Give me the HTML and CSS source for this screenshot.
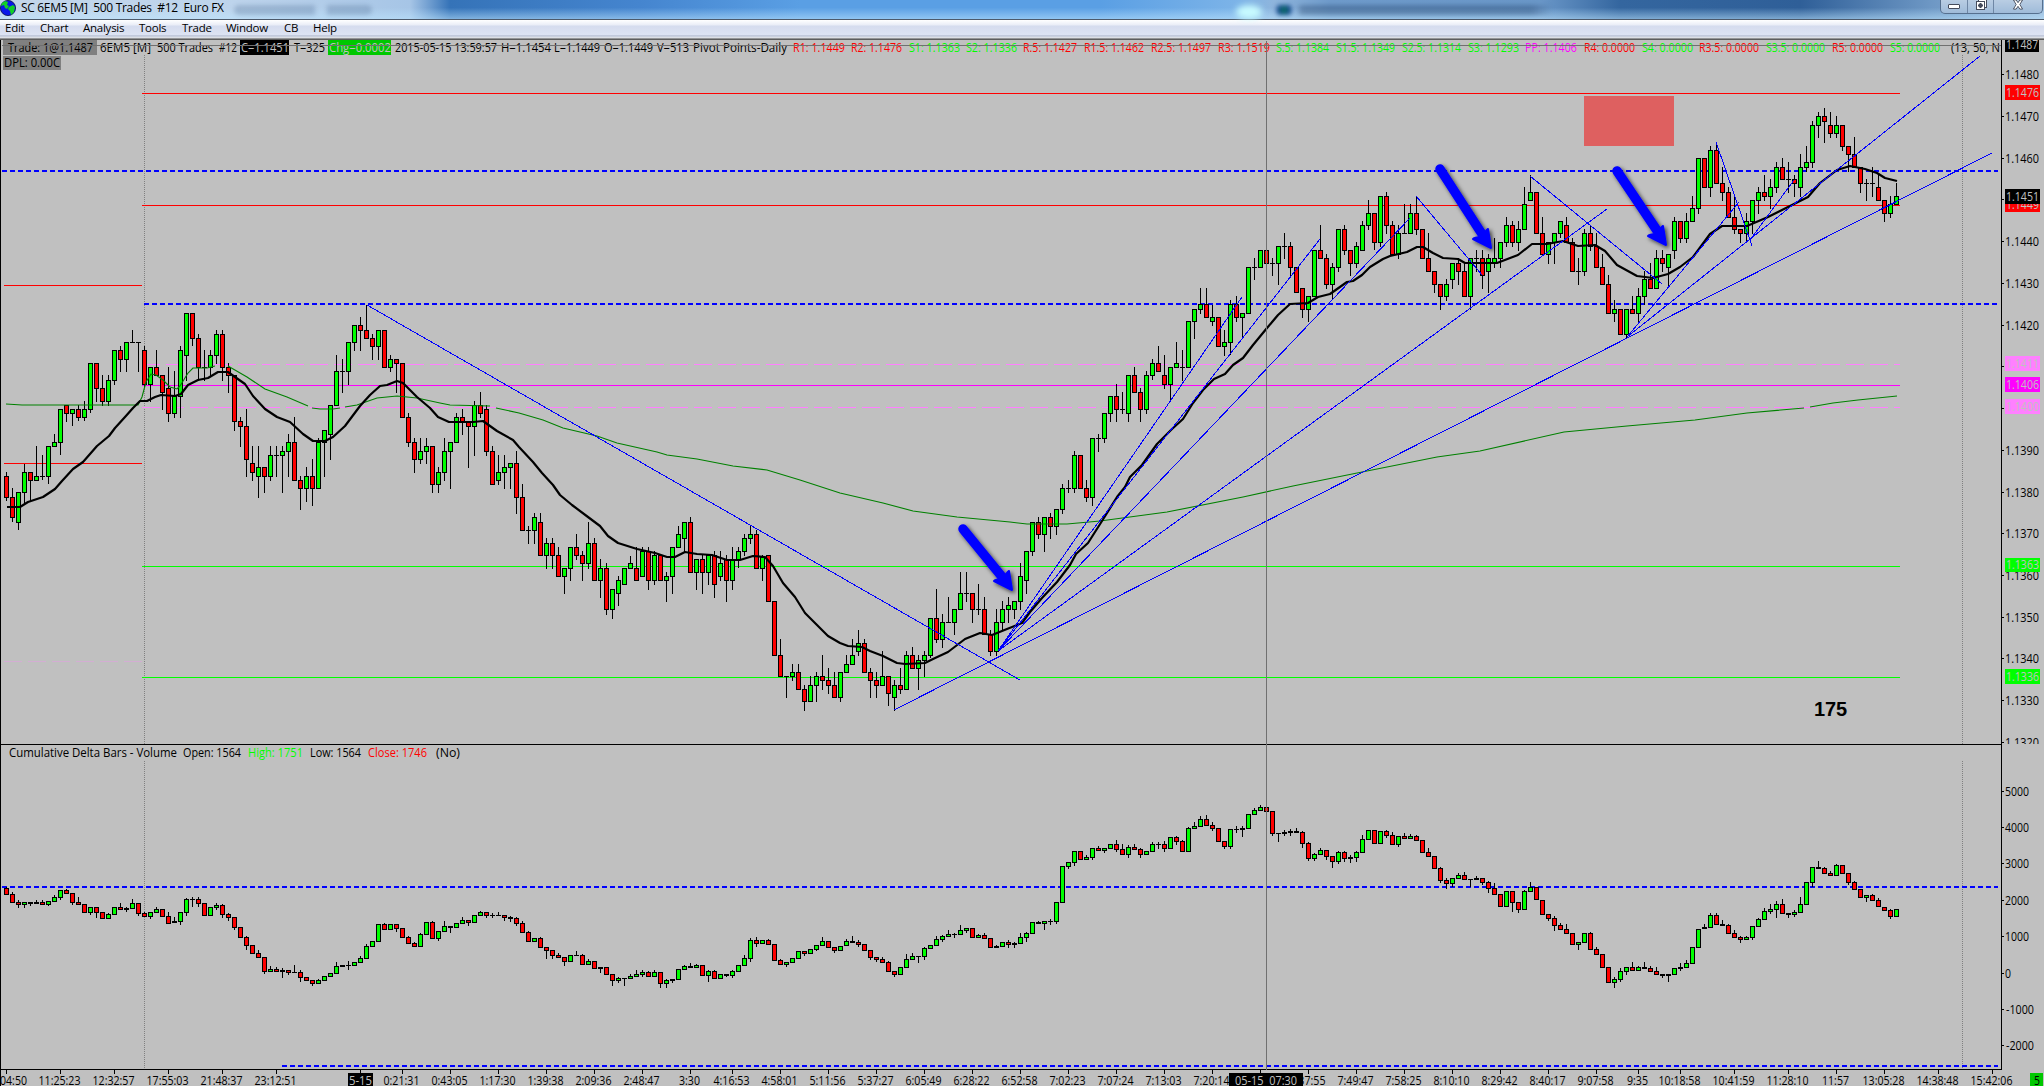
FILE: index.html
```html
<!DOCTYPE html>
<html lang="en">
<head>
  <meta charset="UTF-8">
  <title>SC 6EM5 [M] 500 Trades #12 Euro FX</title>
  <link rel="stylesheet" href="styles.css">
</head>
<body>

<header class="titlebar">
  <svg class="globe" viewBox="0 0 16 16">
    <circle cx="8" cy="8" r="7.6" fill="#0a18e8" stroke="#04084a" stroke-width=".8"/>
    <path d="M2 3l3-2 3 1-1 3 2 1-2 3-2-1-1-3-3 1zM9 7l4-2 2 2-1 5-3 3-1-4-2-2z" fill="#12d028"/>
  </svg>
  <h1>SC 6EM5 [M]&nbsp; 500 Trades&nbsp; #12&nbsp; Euro FX</h1>
  <div class="ghost ghost-left"></div>
  <div class="glow"></div>
  <div class="ghost ghost-right"></div>
  <div class="window-buttons">
    <span class="min"><i></i></span>
    <span class="max"><i></i></span>
    <span class="close"><svg viewBox="0 0 14 12"><path d="M2 1h3l2 3 2-3h3L9 6l3 5H9L7 8l-2 3H2l3-5z" fill="#fff" stroke="#454c5c"/></svg></span>
  </div>
</header>

<nav class="menu">
  <a>Edit</a><a>Chart</a><a>Analysis</a><a>Tools</a><a>Trade</a><a>Window</a><a>CB</a><a>Help</a>
</nav>

<main>
  <svg id="chart" class="chart" viewBox="0 40 2044 1046">
    <defs>
      <clipPath id="upper"><rect x="0" y="40" width="2044" height="704"/></clipPath>
      <clipPath id="plot"><rect x="0" y="40" width="2001" height="1046"/></clipPath>
      <filter id="shadow" x="-30%" y="-30%" width="160%" height="160%">
        <feDropShadow dx="2" dy="2" stdDeviation="2" flood-opacity=".7"/>
      </filter>
      <g id="arrowhead"><path d="M0 0L-18-9Q-17-11-9-11Q-5-18-3-19Z"/></g>
    </defs>

    <!-- session breaks -->
    <g class="session">
      <path d="M144.5 55V744M144.5 761V1069M1962.5 55V744M1962.5 761V1069"/>
    </g>

    <!-- pivots -->
    <g class="line">
      <path class="red" d="M4 285.5H142M4 463.5H142M142 93.5H1900M142 205.5H1900"/>
      <path class="magenta" d="M142 385.5H1900"/>
      <path class="pink" d="M142 364.5H1900M142 407.5H1900"/>
      <path class="pink faint" d="M4 661.5H142"/>
      <path class="lime" d="M142 566.5H1900M142 677.5H1900"/>
      <path class="level" d="M2 171H1998M144 304H1998M2 887H1998M282 1066H1998"/>
    </g>

    <rect class="zone" x="1584" y="96" width="90" height="50"/>

    <g id="price" class="candles"></g>
    <g id="delta" class="candles"></g>

    <polyline class="slow" points="6,404 22,405 138,405 142,397 146,382 151,374 156,375 163,380 170,387 177,389 180,386 188,373 193,368 207,368 215,366"/>
    <polyline class="slow" points="228,366 247,377 265,389 287,397 308,406"/>
    <polyline class="slow" points="312,408 320,409 333,409 340,408"/>
    <polyline class="slow" points="345,407 357,405 377,398 397,396 417,398 440,403 450,405 490,406"/>
    <polyline class="slow" points="496,408 519,413 543,420 563,428 597,436 617,443 657,452 667,455 697,459 733,466 767,470 800,480 840,493 883,503 913,511 957,517 1010,522 1027,524 1067,524 1100,521 1167,512 1243,497 1293,486 1367,471 1437,457 1480,451 1564,432 1627,426 1695,420 1747,413 1804,408"/>
    <polyline class="slow" points="1810,407 1833,403 1858,400 1897,396"/>

    <polyline class="fast" points="7,507 20,507 28,502 43,497 55,489 62,481 73,469 83,462 97,446 109,436 115,428 125,417 133,408 140,401 147,401 155,397 161,395 175,396 181,394 188,385 198,380 208,378 218,372 228,372 235,377 245,384 253,396 265,409 277,417 290,422 303,434 313,441 325,441 333,437 345,426 360,406 370,395 380,386 387,385 397,381 403,383 417,397 430,408 438,417 449,422 473,422 483,421 497,431 513,440 519,447 533,462 542,473 553,485 560,495 572,505 588,517 600,526 608,536 618,543 637,549 655,553 667,557 675,557 685,552 697,554 712,555 727,560 740,560 753,556 765,557 773,566 783,583 795,597 805,613 817,625 828,636 840,643 848,646 862,647 870,651 883,656 897,663 905,664 925,663 933,659 948,652 965,639 980,633 992,635 1007,629 1022,623 1030,612 1042,598 1057,582 1070,565 1076,554 1088,543 1102,521 1117,497 1125,487 1130,477 1142,465 1157,444 1172,429 1183,419 1193,403 1203,390 1214,379 1225,374 1233,365 1243,358 1253,345 1267,328 1278,315 1290,304 1308,303 1318,297 1330,294 1347,282 1353,281 1362,275 1370,267 1383,259 1390,256 1407,252 1417,247 1423,247 1433,253 1443,258 1458,259 1465,263 1497,263 1518,255 1532,244 1547,244 1563,241 1578,246 1595,245 1605,251 1617,265 1637,276 1653,278 1668,274 1680,267 1693,257 1710,234 1722,226 1747,226 1768,217 1790,206 1808,197 1820,183 1837,170 1850,166 1865,169 1877,173 1885,178 1897,181"/>

    <g class="trend">
      <path d="M367 305L1020 680M894 710L1992 153"/>
      <path d="M998 651L1242 297M998 651L1320 239M998 651L1410 218M998 651L1607 209"/>
      <path d="M1416 196L1482 275M1530 176L1662 284M1716 142L1752 246"/>
      <path d="M1627 337L1739 202M1627 337L1980 56M1750 240L1794 180"/>
    </g>

    <!-- entry arrows -->
    <g class="arrow" filter="url(#shadow)">
      <path class="shaft" d="M1440 169L1482 234"/><use href="#arrowhead" x="1491" y="248"/>
    </g>
    <g class="arrow" filter="url(#shadow)">
      <path class="shaft" d="M1617 171L1658 232"/><use href="#arrowhead" x="1666" y="245"/>
    </g>
    <g class="arrow" filter="url(#shadow)">
      <path class="shaft" d="M963 529L1003 578"/><use href="#arrowhead" x="1012" y="590"/>
    </g>

    <text class="note" x="1814" y="716" textLength="33">175</text>

    <g id="status" clip-path="url(#plot)"></g>
    <g id="axis"></g>

    <path class="frame" d="M.5 40V1086M2001.5 40V1070M0 744.5H2002M0 1069.5H2002"/>
    <path class="cursor" d="M1266.5 41V1070M2 45.5H2001"/>
    <g id="tags"></g>
  </svg>
</main>

<script src="chart.js"></script>
</body>
</html>
```
FILE: styles.css
```css
* { box-sizing: border-box; margin: 0; padding: 0; }

body {
  width: 2044px;
  height: 1086px;
  overflow: hidden;
  background: #c0c0c0;
  font-family: "Open Sans", "Noto Sans", sans-serif;
  color: #000;
}

/* title bar */
.titlebar {
  display: flex;
  align-items: flex-start;
  height: 20px;
  border-bottom: 1px solid #4d5a6b;
  background:
    linear-gradient(to bottom, rgba(255,255,255,0) 40%, rgba(190,230,255,.55)),
    linear-gradient(to right, #c3d6ea 0, #bdd4ec 240px, #a6c5e6 410px, #3573b8 450px, #4585cf 640px, #5a9fe4 800px, #5a9fe4 1100px, #7db4e8 1240px, #8fb5dc 1275px, #6f9bcb 1330px, #6a97c8 1540px, #34669f 1620px, #2f5f98 1800px, #6d97c4 1930px, #9dbcdc 2044px);
}

.globe {
  width: 16px;
  height: 16px;
}

.titlebar h1 {
  width: 218px;
  padding-left: 5px;
  font-size: 12px;
  line-height: 15px;
  font-weight: 400;
  letter-spacing: -.32px;
  white-space: nowrap;
}

.ghost {
  height: 10px;
  margin-top: 5px;
  border-radius: 5px;
  filter: blur(2px);
}

.ghost-left {
  width: 138px;
  background: linear-gradient(to right, rgba(70,100,140,.28) 80px, transparent 82px, transparent 92px, rgba(70,100,140,.28) 94px);
}

.ghost-right {
  width: 290px;
  background: radial-gradient(circle at 12px 5px, #0a7a58 0, #14468f 6px, transparent 9px), linear-gradient(to right, transparent 24px, rgba(30,60,100,.35) 30px, rgba(30,60,100,.35) 260px, transparent 280px);
}

.glow {
  width: 26px;
  height: 14px;
  margin: 5px 10px 0 864px;
  border-radius: 50%;
  background: #c8fbff;
  filter: blur(3px);
}

.window-buttons {
  display: flex;
  width: 103px;
  height: 14px;
  margin-left: auto;
  margin-right: 1px;
  border: 1px solid #56708f;
  border-top: 0;
  border-radius: 0 0 5px 5px;
  background: linear-gradient(#b9cde3, #9fbbd9);
}

.window-buttons span {
  display: flex;
  justify-content: center;
  align-items: center;
  width: 27px;
  border-right: 1px solid #6f87a5;
}

.window-buttons .close { width: 48px; border-right: 0; }
.window-buttons .close svg { width: 14px; height: 11px; margin-bottom: 4px; }

.min i {
  width: 12px;
  height: 5px;
  border: 1px solid #454c5c;
  border-radius: 1px;
  background: #fff;
}

.max i {
  width: 9px;
  height: 9px;
  margin-bottom: 3px;
  border: 1px solid #454c5c;
  background: radial-gradient(#454c5c 0 2px, #fff 2.5px);
  box-shadow: 2px -2px 0 -1px #fff, 2px -2px 0 0 #454c5c;
}

/* menu */
.menu {
  display: grid;
  grid-template-columns: 35px 43px 56px 43px 44px 58px 29px auto;
  height: 20px;
  padding-left: 5px;
  background: linear-gradient(#fff 0, #e9edf7 5px, #d5dcee 6px, #dde3f3 15px, #a6afc4 16px, #eef1f8 17px, #c9ccd2 18px, #5d5d5d 19px);
}

.menu a {
  font-size: 11.5px;
  line-height: 16px;
  letter-spacing: -.25px;
}

/* chart */
.chart {
  display: block;
  width: 2044px;
  height: 1046px;
  background: #c0c0c0;
}

.chart text {
  font-family: "Open Sans", "Noto Sans", sans-serif;
  font-size: 12px;
  white-space: pre;
}

.chart .note {
  font-family: "Liberation Sans", Arial, sans-serif;
  font-size: 20px;
  font-weight: 700;
}

.line, .candles, .frame, .session, .cursor, .tick { shape-rendering: crispEdges; }
.line path, .frame, .cursor, .session, .tick { fill: none; stroke-width: 1; }

.line .red { stroke: #f00; }
.line .magenta { stroke: #f0f; }
.line .pink { stroke: #ff80ff; stroke-dasharray: 18 6; }
.line .faint { stroke-opacity: .3; }
.line .lime { stroke: #0f0; }
.line .level { stroke: #00f; stroke-width: 2; stroke-dasharray: 5 3; }

.session { stroke: #808080; stroke-dasharray: 1 1; }
.frame, .tick { stroke: #000; }
.cursor { stroke: #707070; }
.zone { fill: #de6060; }

.slow, .fast, .trend path { fill: none; }
.slow { stroke: #008000; stroke-width: 1.1; }
.fast { stroke: #000; stroke-width: 2.2; stroke-linejoin: round; }
.trend path { stroke: #00f; stroke-width: 1; shape-rendering: crispEdges; }

.wick, .body { fill: #000; }
.up { fill: #0f0; }
.down { fill: #f00; }

.arrow { fill: #00f; stroke: #00f; stroke-width: 2; stroke-linejoin: round; }
.arrow .shaft { stroke-width: 9.5; stroke-linecap: round; }
```
FILE: chart.js
```js
// One entry per bar: u/d (up/down), then high, body top, body bottom, low
const PRICE = `
d472,476,497,500 d488,497,517,521 u492,492,522,529 u464,472,492,504 d472,472,480,500 u446,476,480,480 u455,476,476,479 u446,446,476,483
u434,442,446,446 u409,409,442,454 d405,405,413,421 u409,409,413,425 d405,409,417,420 u401,409,417,420 u363,363,409,412 d363,363,388,401
d375,388,401,405 u375,380,401,405 u350,350,380,384 d346,350,359,371 u342,342,359,371 u330,342,342,342 u342,342,342,371 d346,350,384,386
u367,367,384,401 d350,367,375,375 d375,375,392,409 d367,388,413,421 u371,396,413,417 u346,350,396,417 u313,313,355,380 d313,313,338,345
d334,338,367,380 u350,367,367,380 u350,355,367,375 u330,334,355,363 d330,334,367,380 d363,367,375,392 d375,375,421,430 d417,421,426,446
d409,426,459,476 d446,463,472,480 u446,467,476,497 d467,467,476,492 u446,455,476,480 u446,455,455,476 u446,451,455,492 u434,442,451,476
d417,442,480,480 d476,480,488,509 u467,476,488,501 d459,476,488,505 u438,442,488,488 u430,430,442,476 u405,405,434,459 u355,371,405,405
u359,371,371,392 u342,342,371,384 u325,325,342,350 d317,325,330,350 d305,330,338,338 d334,338,346,359 u330,330,346,359 d330,330,367,367
u355,359,367,371 d359,359,363,392 d363,363,417,417 d413,417,442,446 d438,442,459,472 u438,451,459,463 u438,446,451,463 d446,446,484,492
u467,472,484,492 u438,451,472,480 u442,442,451,488 u413,417,442,442 d409,417,422,434 d422,422,426,467 u401,405,426,455 d392,405,413,417
d405,409,451,455 d446,451,484,484 u455,472,480,484 u455,467,472,488 u463,463,467,488 d451,463,497,513 d484,497,530,530 u526,530,530,543
u513,517,530,543 d513,522,555,555 u538,543,555,568 d538,543,555,568 d547,555,576,576 u568,568,576,593 u547,547,568,580 d534,547,555,559
d551,555,563,580 u522,543,563,568 d538,543,580,580 u559,568,580,597 d563,568,609,614 u589,589,609,618 u576,580,593,605 u568,568,584,584
u556,563,568,568 d547,568,580,580 u547,551,576,576 d547,551,580,589 u551,555,580,584 d555,555,580,580 u572,576,580,601 u547,547,576,593
u526,534,547,547 u522,522,538,551 d517,522,572,572 u559,559,572,589 d555,559,572,593 u555,555,572,584 d551,555,584,597 u551,563,576,580
d555,559,580,601 u547,559,580,589 u547,551,559,567 u534,538,551,555 u525,534,538,543 d530,534,568,568 u555,557,568,580 d555,555,601,601
d601,601,655,655 d639,655,676,676 u676,676,676,697 u664,672,676,680 d664,672,689,689 d685,689,701,710 u676,685,701,701 u672,676,685,701
d655,676,680,689 d668,680,685,693 d672,685,697,697 u672,672,697,701 u655,664,672,672 u639,655,664,664 u630,643,651,655 d639,643,672,672
d668,672,680,697 d672,680,685,697 u651,676,685,685 d676,676,693,705 u680,685,697,710 d668,685,689,693 u651,655,689,689 d647,655,668,668
u655,660,668,689 u651,655,660,676 u618,618,655,657 d589,618,639,642 u614,622,639,647 u597,622,622,622 u609,609,622,634 u572,593,609,609
u572,593,593,601 d593,593,609,622 u584,609,609,614 d597,609,634,634 d630,634,651,655 u609,622,651,655 u601,609,622,630 u597,605,609,622
u601,601,609,618 u563,576,601,609 u551,551,580,593 u522,522,551,555 d517,522,534,538 u517,517,534,551 d513,517,526,538 u509,509,526,534
u484,488,509,513 u480,488,488,492 u451,455,488,492 d455,455,488,488 d480,488,497,501 u438,438,497,505 u434,438,438,451 u413,413,438,442
u396,396,413,421 d384,396,409,421 u392,409,409,413 u375,375,413,421 d367,375,392,392 d388,392,409,421 u371,375,409,413 u359,363,375,379
d346,363,371,371 d355,375,384,388 u367,367,384,401 u342,363,367,367 u350,367,367,380 u321,321,367,367 u309,309,321,338 u288,304,309,313
d288,304,317,317 u305,317,321,325 d317,317,346,346 u330,342,346,355 u300,304,342,354 d296,304,317,321 u313,313,317,338 u267,267,313,313
u258,267,267,279 u250,250,267,267 d250,250,263,263 u258,263,263,275 u246,246,263,284 u233,246,246,258 d242,246,267,275 d267,267,292,292
d288,288,309,317 u296,296,309,321 u250,250,296,296 d225,250,258,258 d254,258,284,288 u263,267,284,299 u229,229,267,271 d225,229,250,254
d250,250,263,275 u242,246,263,267 u221,225,250,250 u200,213,225,229 d213,213,242,249 u196,196,242,246 d192,196,225,233 d221,225,254,254
u225,233,254,258 u204,233,233,233 u204,213,233,233 d196,213,229,234 d229,229,258,258 d233,258,271,271 d271,271,284,292 d284,284,296,309
u279,284,296,300 u263,263,279,288 d258,263,271,284 d263,271,296,296 u258,258,296,309 u250,258,258,271 d250,258,275,288 u254,258,271,292
u238,258,262,267 u242,242,258,267 u217,225,242,246 d221,225,242,246 u221,229,242,250 u187,204,229,229 u175,192,200,200 d192,192,233,233
d217,233,254,254 u242,242,254,263 u233,233,242,263 u221,221,233,237 d217,225,242,242 d238,242,271,271 u258,271,271,284 u229,233,271,275
d225,233,246,250 d233,246,267,267 d254,267,284,284 d275,284,313,313 u300,309,313,321 d309,309,334,334 u309,309,334,338 d296,309,313,313
u288,296,313,323 u271,279,296,304 d263,279,288,288 u250,258,288,288 d250,258,263,271 u254,254,267,287 u217,221,250,258 d221,221,238,242
u213,221,238,242 u196,208,221,221 u158,158,208,213 d158,158,187,187 u146,150,187,196 d142,150,183,183 d167,183,192,200 d187,192,217,217
d196,217,229,233 d229,229,233,242 u213,221,233,242 u200,200,221,233 u187,192,200,213 d175,192,196,200 u179,187,196,208 u162,167,187,192
d158,167,179,179 u162,179,179,192 d175,179,183,196 u154,167,187,196 u146,162,167,171 u121,125,162,167 u112,116,125,137 d108,116,121,142
d112,125,133,137 u116,125,133,137 d125,125,146,150 d146,146,154,171 d137,154,167,167 d167,167,183,192 u179,183,183,200 u167,183,183,196
d175,187,200,200 d200,200,213,221 u196,204,213,217 u183,196,204,204`;

const DELTA = `
d887,888,894,894 d892,894,902,902 d900,902,904,907 u902,902,904,907 d902,902,903,905 u900,902,903,903 d900,902,904,904 u901,901,904,905
u895,897,901,901 u890,890,897,899 d889,890,893,893 d893,893,902,904 d897,902,904,904 d904,904,912,912 u907,907,912,914 d907,907,912,917
d912,912,918,918 u913,914,918,918 u907,907,914,914 d903,907,909,909 d907,908,909,911 u899,903,908,908 d903,903,913,915 d912,913,916,916
u912,912,916,918 u907,909,912,912 d909,909,916,916 d912,916,923,923 d917,921,922,922 u912,912,921,924 u898,899,912,915 u897,899,899,906
d897,899,903,906 d903,903,915,915 u907,907,915,915 u903,905,907,909 d904,905,914,917 d913,914,917,920 d917,917,927,929 d927,927,937,937
d936,937,945,949 d945,945,953,953 d950,953,957,957 d957,957,971,973 u966,969,971,971 d967,969,971,971 d968,970,971,977 d970,970,972,974
u965,972,972,972 d970,972,977,981 d977,977,980,980 d980,980,983,985 u979,980,983,983 u976,976,980,980 u973,973,976,976 u962,966,973,973
u965,965,966,966 u961,965,965,969 u962,962,965,965 u956,958,962,962 u944,946,958,958 u941,941,946,946 u924,924,941,941 d923,924,929,929
u924,924,929,929 d924,924,928,931 d928,928,937,937 d936,937,943,943 d942,943,946,946 u933,934,946,946 u922,922,934,934 d921,922,938,938
u931,931,938,940 u921,926,931,931 d926,926,927,932 u923,923,927,927 u917,920,923,923 d920,920,922,925 u915,915,922,922 u911,912,915,915
d912,912,915,917 u913,915,915,917 u912,915,915,915 d915,915,917,920 d916,917,918,921 d917,918,923,925 d921,923,932,932 d931,932,941,941
u938,938,941,941 d937,938,947,947 d947,947,950,958 d950,950,955,958 d953,955,957,957 d957,957,961,965 u955,955,961,961 u951,955,955,955
d954,955,964,964 u959,961,964,964 d961,961,968,968 d967,967,968,972 d967,967,974,974 d974,974,980,985 u977,978,980,982 u978,978,978,985
u974,976,978,978 u970,974,976,976 u970,972,974,976 d971,972,976,976 u970,972,976,976 d972,972,983,987 u979,980,983,987 u979,979,980,982
u969,969,979,979 u965,966,969,969 u963,966,967,967 u964,965,967,967 d965,965,975,975 u970,971,975,981 d970,971,978,978 u974,974,978,978
d974,974,975,976 u970,971,975,977 u965,965,971,971 u955,958,965,965 u938,940,958,961 d937,940,943,946 u940,940,943,943 d939,940,944,944
d944,944,960,960 d959,960,964,964 u962,962,964,966 u958,958,962,962 u951,951,958,958 d951,951,953,955 u949,949,953,953 u945,945,949,950
u937,941,945,945 d941,941,947,947 d947,947,950,952 u946,946,950,950 u939,941,945,945 d936,941,942,942 d940,942,944,946 d944,944,950,950
d950,950,957,959 d957,957,959,961 d957,959,962,962 d961,962,971,971 d971,971,974,976 u967,967,974,974 u954,959,967,967 u953,956,959,959
u956,956,956,962 u947,948,956,959 u945,945,948,948 u936,939,945,945 u935,936,939,941 u930,934,936,936 u933,934,934,937 u925,930,934,934
u928,928,930,932 d928,928,937,937 u934,935,937,937 d933,935,938,938 d938,938,947,947 u945,946,947,947 u942,942,946,946 d940,942,944,947
d942,943,944,947 u933,937,943,943 u932,933,937,941 u922,922,933,933 d921,922,923,923 u921,921,923,929 u919,921,921,924 u902,902,921,923
u866,866,902,902 u862,862,866,868 u851,851,862,865 d851,851,859,859 u855,857,859,859 u848,848,857,859 d846,848,850,850 u848,848,850,852
u844,844,848,848 d840,844,849,851 d844,849,854,854 u845,847,854,857 d844,847,849,849 d848,849,854,857 u851,851,854,854 u842,844,851,851
u842,844,844,848 d841,844,848,851 u837,837,848,848 d836,837,841,844 d840,841,851,851 u827,828,851,851 u822,826,828,828 u816,819,826,826
d815,819,825,825 d822,825,828,830 d828,828,841,841 d841,841,846,848 u829,829,846,848 u826,829,829,832 d826,828,829,836 u814,814,828,828
u808,810,814,814 u805,807,810,810 d807,807,811,811 d811,811,833,835 u833,833,833,841 d830,832,833,835 d829,831,832,835 u828,831,832,832
d831,832,843,847 d842,843,858,860 u853,854,858,860 u848,850,854,854 d850,850,856,859 d856,856,861,867 u851,852,861,863 d851,852,858,861
d855,857,858,862 u851,852,857,861 u835,839,852,852 u830,830,839,839 d830,830,843,843 u831,831,843,843 d830,831,835,837 d832,835,844,844
u836,836,844,846 d833,836,838,838 u834,836,838,838 d835,836,840,840 d840,840,852,852 d848,852,856,856 d856,856,868,868 d867,868,880,882
d878,880,883,888 u878,878,883,886 u873,875,878,878 d872,875,879,879 u879,879,879,886 d876,878,879,879 d878,878,882,884 d881,882,888,892
d883,888,894,894 d894,894,906,906 u891,891,906,906 d891,891,902,911 d902,902,909,912 u890,891,909,909 u882,887,891,891 d887,887,899,899
d900,900,914,914 d914,914,918,920 d916,918,925,930 d923,925,929,929 d924,929,933,933 d933,933,944,944 u942,942,944,949 u933,933,942,942
d932,933,949,949 d947,949,954,954 d954,954,967,967 d967,967,982,982 u977,979,982,987 u968,971,979,981 u967,967,971,974 d962,967,970,970
u966,967,970,970 d962,967,968,968 d966,968,971,971 d967,971,974,974 d974,974,975,977 d974,974,975,981 u968,968,974,974 d963,967,968,970
u960,963,967,967 u947,947,963,963 u929,929,947,947 d924,927,928,928 u913,915,927,927 d913,915,924,924 d920,924,925,925 d924,925,933,933
d930,933,937,937 d936,937,939,942 u936,937,939,939 u926,926,937,939 u918,919,926,926 u908,911,919,919 u904,909,911,913 u901,904,909,917
d899,904,913,913 d913,913,914,917 u910,912,914,916 u897,904,912,912 u882,882,904,904 u867,867,882,886 d861,867,868,868 d867,868,873,873
d871,873,875,875 u864,865,875,875 d865,865,873,873 d873,873,882,884 d881,882,889,889 d889,889,897,897 u895,895,897,901 d894,895,900,900
d898,900,906,906 d907,907,910,910 d909,910,916,918 u909,909,916,916`;

const NS = 'http://www.w3.org/2000/svg';

function add(parent, tag, attrs, text) {
  const el = document.createElementNS(NS, tag);
  for (const k in attrs) el.setAttribute(k, attrs[k]);
  if (text !== undefined) el.textContent = text;
  parent.appendChild(el);
  return el;
}

function candles(id, data) {
  const g = document.getElementById(id);
  data.trim().split(/\s+/).forEach((bar, i) => {
    const x = 6 + 6 * i;
    const [h, t, b, l] = bar.slice(1).split(',').map(Number);
    add(g, 'rect', { class: 'wick', x, y: h, width: 1, height: l - h + 1 });
    add(g, 'rect', { class: 'body', x: x - 2, y: t, width: 5, height: b - t + 1 });
    if (b - t > 1) {
      add(g, 'rect', { class: bar[0] === 'u' ? 'up' : 'down', x: x - 1, y: t + 1, width: 3, height: b - t - 1 });
    }
  });
}

function label(parent, x, y, width, text, fill) {
  add(parent, 'text', { x, y, textLength: width, lengthAdjust: 'spacingAndGlyphs', fill: fill || '#000' }, text);
}

candles('price', PRICE);
candles('delta', DELTA);

// status rows: x start, x end, text, colour
const status = document.getElementById('status');
add(status, 'rect', { x: 3, y: 40, width: 94, height: 15, fill: '#808080' });
add(status, 'rect', { x: 3, y: 56, width: 58, height: 14, fill: '#808080' });
add(status, 'rect', { x: 240, y: 40, width: 49, height: 15, fill: '#000' });
add(status, 'rect', { x: 328, y: 40, width: 63, height: 15, fill: '#00c800' });

const RED = '#f00', LIME = '#0f0', GREY = '#c0c0c0';
[
  [8, 93, 'Trade: 1@1.1487'], [100, 151, '6EM5 [M]'], [157, 213, '500 Trades'], [219, 237, '#12'],
  [241, 289, 'C=1.1451', GREY], [294, 325, 'T=325'], [329, 391, 'Chg=0.0002', GREY],
  [395, 497, '2015-05-15 13:59:57'], [501, 551, 'H=1.1454'], [554, 600, 'L=1.1449'], [604, 653, 'O=1.1449'], [657, 689, 'V=513'],
  [693, 787, 'Pivot Points-Daily'],
  [793, 845, 'R1: 1.1449', RED], [851, 902, 'R2: 1.1476', RED], [909, 960, 'S1: 1.1363', LIME], [966, 1017, 'S2: 1.1336', LIME],
  [1023, 1077, 'R.5: 1.1427', RED], [1084, 1144, 'R1.5: 1.1462', RED], [1151, 1211, 'R2.5: 1.1497', RED], [1218, 1270, 'R3: 1.1519', RED],
  [1276, 1329, 'S.5: 1.1384', LIME], [1336, 1395, 'S1.5: 1.1349', LIME], [1402, 1461, 'S2.5: 1.1314', LIME], [1468, 1519, 'S3: 1.1293', LIME],
  [1525, 1577, 'PP: 1.1406', '#f0f'], [1584, 1635, 'R4: 0.0000', RED], [1642, 1693, 'S4: 0.0000', LIME], [1699, 1759, 'R3.5: 0.0000', RED],
  [1766, 1825, 'S3.5: 0.0000', LIME], [1832, 1883, 'R5: 0.0000', RED], [1890, 1940, 'S5: 0.0000', LIME], [1951, 2000, '(13, 50, N']
].forEach(([a, b, text, fill]) => label(status, a, 52, b - a, text, fill));
label(status, 4, 67, 56, 'DPL: 0.00C');

[
  [9, 177, 'Cumulative Delta Bars - Volume'], [183, 241, 'Open: 1564'], [248, 303, 'High: 1751', LIME],
  [310, 361, 'Low: 1564'], [368, 427, 'Close: 1746', RED], [436, 460, '(No)']
].forEach(([a, b, text, fill]) => label(status, a, 757, b - a, text, fill));

// price scale
const axis = document.getElementById('axis');
const upper = add(axis, 'g', { 'clip-path': 'url(#upper)' });
const priceY = p => 46 + (11487 - p) * 4.173;
for (let p = 11480; p >= 11320; p -= 10) {
  const y = Math.round(priceY(p));
  add(axis, 'path', { class: 'tick', d: `M2002 ${y - .5}h2` });
  if (p !== 11400 && p !== 11450) label(upper, 2005, y + 4, 34, (p / 10000).toFixed(4));
}

// delta scale
[5000, 4000, 3000, 2000, 1000, 0, -1000, -2000].forEach(v => {
  const y = Math.round(973.5 - v * .03635);
  add(axis, 'path', { class: 'tick', d: `M2002 ${y - .5}h2` });
  label(axis, v < 0 ? 2006 : 2005, y + 4, v ? (v < 0 ? 28 : 24) : 6, String(v));
});

// time scale
[
  [6, '04:50'], [60, '11:25:23'], [114, '12:32:57'], [168, '17:55:03'], [222, '21:48:37'], [276, '23:12:51'], [360, ''],
  [402, '0:21:31'], [450, '0:43:05'], [498, '1:17:30'], [546, '1:39:38'], [594, '2:09:36'], [642, '2:48:47'], [690, '3:30'],
  [732, '4:16:53'], [780, '4:58:01'], [828, '5:11:56'], [876, '5:37:27'], [924, '6:05:49'], [972, '6:28:22'], [1020, '6:52:58'],
  [1068, '7:02:23'], [1116, '7:07:24'], [1164, '7:13:03'], [1212, '7:20:14'], [1260, ''], [1308, '7:37:55'], [1356, '7:49:47'],
  [1404, '7:58:25'], [1452, '8:10:10'], [1500, '8:29:42'], [1548, '8:40:17'], [1596, '9:07:58'], [1638, '9:35'],
  [1680, '10:18:58'], [1734, '10:41:59'], [1788, '11:28:10'], [1836, '11:57'], [1884, '13:05:28'], [1938, '14:38:48'], [1992, '15:42:06']
].forEach(([x, text]) => {
  add(axis, 'path', { class: 'tick', d: `M${x + .5} 1070v4` });
  const w = { 4: 21, 5: 27, 7: 36, 8: 42 }[text.length];
  if (text) label(axis, x === 6 ? 0 : x - w / 2 - .5, 1085, w, text);
});

// price and time tags
const tags = document.getElementById('tags');
function tag(x, y, w, h, text, bg, pad) {
  add(tags, 'rect', { x, y, width: w, height: h, fill: bg });
  label(tags, x + (pad || 1), y + h - 3, w - 2 * (pad || 1), text, GREY);
}
tag(2005, 38, 34, 14, '1.1487', '#000');
tag(2005, 85, 35, 15, '1.1476', RED);
tag(2005, 198, 35, 14, '1.1449', RED);
tag(2005, 189, 35, 15, '1.1451', '#000');
tag(2005, 356, 35, 15, '1.1411', '#ff80ff');
tag(2005, 377, 35, 15, '1.1406', '#f0f');
tag(2005, 399, 35, 15, '1.1400', '#ff80ff');
tag(2005, 558, 35, 14, '1.1363', LIME);
tag(2005, 669, 35, 15, '1.1336', LIME);
add(tags, 'rect', { x: 348, y: 1073, width: 25, height: 13, fill: '#000' });
label(tags, 349, 1085, 23, '5-15', GREY);
add(tags, 'rect', { x: 1229, y: 1073, width: 74, height: 13, fill: '#000' });
label(tags, 1235, 1085, 62, '05-15  07:30', GREY);
add(tags, 'rect', { x: 2030, y: 1073, width: 13, height: 13, fill: '#00c800' });
label(tags, 2034, 1085, 6, '5');
```
